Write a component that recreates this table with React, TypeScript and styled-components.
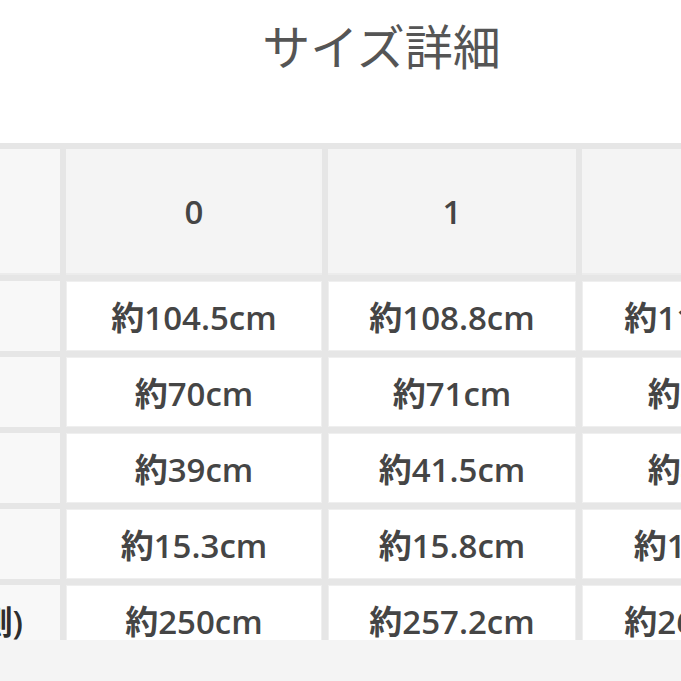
import styled, { createGlobalStyle } from 'styled-components';

const GlobalStyle = createGlobalStyle`
  html, body {
    margin: 0;
    padding: 0;
    background: #ffffff;
  }
  body {
    font-family: "Open Sans", "Noto Sans CJK JP", sans-serif;
  }
`;

const rows = [
  { label: '着丈', values: ['約104.5cm', '約108.8cm', '約113.1cm'] },
  { label: '身幅', values: ['約70cm', '約71cm', '約72cm'] },
  { label: '肩幅', values: ['約39cm', '約41.5cm', '約44cm'] },
  { label: '袖口', values: ['約15.3cm', '約15.8cm', '約16.3cm'] },
  { label: '裾周り(片側)', values: ['約250cm', '約257.2cm', '約264.4cm'] },
];

const sizes = ['0', '1', '2'];

const App = () => {
  return (
    <>
      <GlobalStyle />
      <Screen>
        <Viewport>
          <TitleRow>
            <Title>サイズ詳細</Title>
          </TitleRow>
          <SizeTable>
            <HeadCell $label />
            {sizes.map((s) => (
              <HeadCell key={s}>{s}</HeadCell>
            ))}
            {rows.map((row) => (
              <Row key={row.label}>
                <LabelCell>{row.label}</LabelCell>
                {row.values.map((v) => (
                  <ValueCell key={v}>{v}</ValueCell>
                ))}
              </Row>
            ))}
          </SizeTable>
        </Viewport>
        <BottomBand />
      </Screen>
    </>
  );
};

const Screen = styled.div`
  display: flex;
  flex-direction: column;
  width: 681px;
  height: 681px;
  overflow: hidden;
`;

const Viewport = styled.div`
  height: 640px;
  overflow: hidden;
  background: #ffffff;
`;

const TitleRow = styled.div`
  display: flex;
  justify-content: center;
  padding: 20px 0 0 82px;
  height: 143px;
  box-sizing: border-box;
`;

const Title = styled.h1`
  margin: 0;
  font-family: "Noto Sans CJK JP", sans-serif;
  font-size: 48px;
  font-weight: 400;
  line-height: 1;
  color: #555555;
`;

const SizeTable = styled.div`
  display: grid;
  grid-template-columns: 260px 256px 248px 250px;
  grid-auto-rows: 70px;
  grid-template-rows: 126px;
  gap: 6px;
  width: max-content;
  margin-left: -200px;
  padding-top: 6px;
  background: #e6e6e6;
`;

const Row = styled.div`
  display: contents;
`;

const Cell = styled.div`
  display: flex;
  align-items: center;
  justify-content: center;
  box-sizing: border-box;
  font-family: "Open Sans", "Noto Sans CJK JP", sans-serif;
  font-size: 33px;
  font-weight: 600;
  color: #454545;
  white-space: nowrap;
`;

const HeadCell = styled(Cell)<{ $label?: boolean }>`
  background: ${(p) => (p.$label ? '#f7f7f7' : '#f4f4f4')};
  border-bottom: 2px solid #ececec;
`;

const LabelCell = styled(Cell)`
  background: #f8f8f8;
  color: #2e2e2e;
`;

const ValueCell = styled(Cell)`
  background: #ffffff;
  border: 1px solid #efefef;
`;

const BottomBand = styled.div`
  flex: 1;
  background: #f4f4f4;
`;

export default App;
